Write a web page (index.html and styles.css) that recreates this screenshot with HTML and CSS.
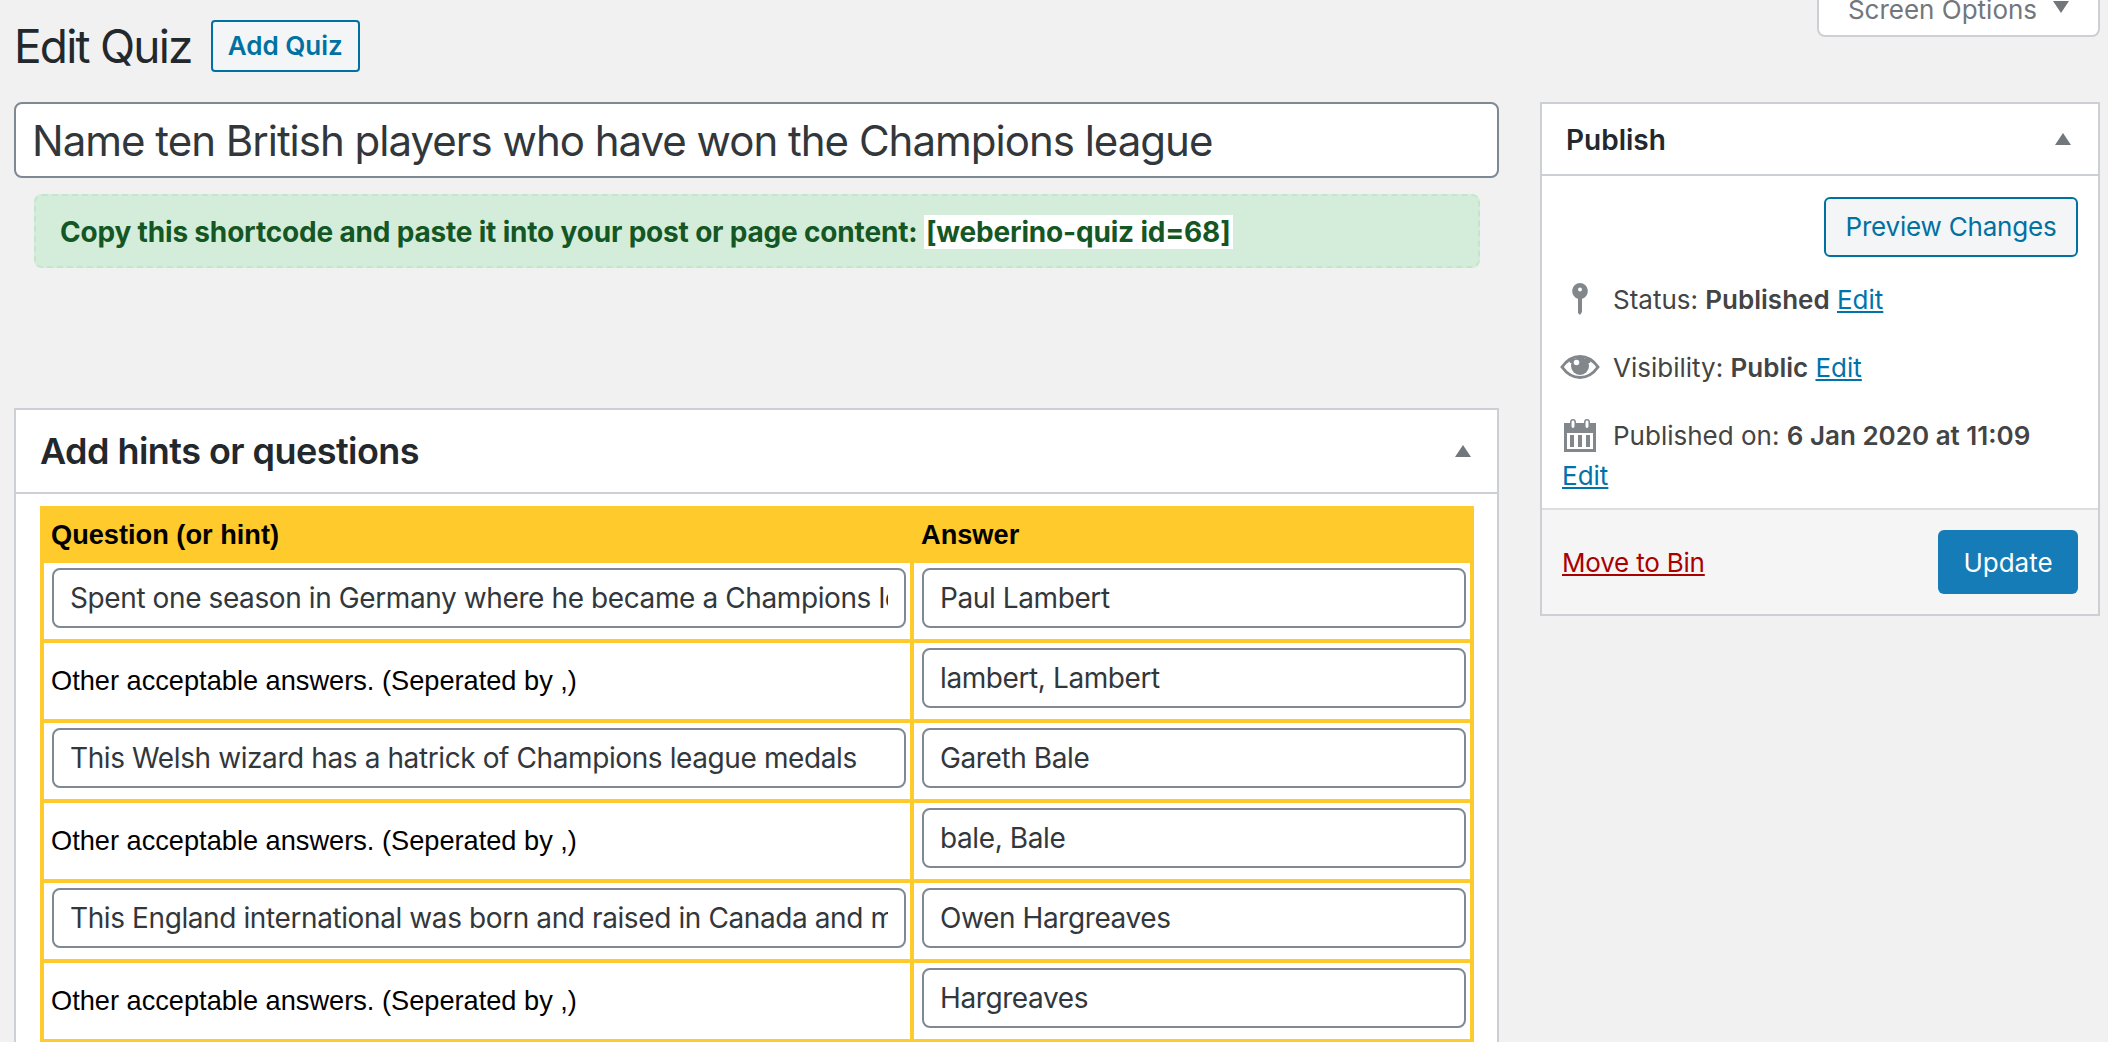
FILE: index.html
```html
<!DOCTYPE html>
<html lang="en">
<head>
    <meta charset="UTF-8">
    <title>Edit Quiz</title>
    <link rel="stylesheet" href="styles.css">
</head>
<body>
    <div class="screen-tab"><span>Screen Options</span><i class="tab-arrow"></i></div>

    <div class="page-head">
        <h1>Edit Quiz</h1>
        <a class="add-btn" href="#">Add Quiz</a>
    </div>

    <div class="columns">
        <div class="main-col">
            <input class="title-input" type="text" value="Name ten British players who have won the Champions league">
            <div class="notice">Copy this shortcode and paste it into your post or page content: <code>[weberino-quiz id=68]</code></div>

            <div class="box hints-box">
                <div class="hints-head">
                    <h2>Add hints or questions</h2>
                    <i class="arrow-up"></i>
                </div>
                <div class="hints-body">
                    <table class="quiz-table">
                        <tr>
                            <th class="col-q">Question (or hint)</th>
                            <th class="col-a">Answer</th>
                        </tr>
                        <tr>
                            <td><input type="text" value="Spent one season in Germany where he became a Champions league winner"></td>
                            <td><input type="text" value="Paul Lambert"></td>
                        </tr>
                        <tr>
                            <td class="label">Other acceptable answers. (Seperated by ,)</td>
                            <td><input type="text" value="lambert, Lambert"></td>
                        </tr>
                        <tr>
                            <td><input type="text" value="This Welsh wizard has a hatrick of Champions league medals"></td>
                            <td><input type="text" value="Gareth Bale"></td>
                        </tr>
                        <tr>
                            <td class="label">Other acceptable answers. (Seperated by ,)</td>
                            <td><input type="text" value="bale, Bale"></td>
                        </tr>
                        <tr>
                            <td><input type="text" value="This England international was born and raised in Canada and moved here"></td>
                            <td><input type="text" value="Owen Hargreaves"></td>
                        </tr>
                        <tr>
                            <td class="label">Other acceptable answers. (Seperated by ,)</td>
                            <td><input type="text" value="Hargreaves"></td>
                        </tr>
                    </table>
                </div>
            </div>
        </div>

        <div class="side-col">
            <div class="box publish-box">
                <div class="publish-head">
                    <h2>Publish</h2>
                    <i class="arrow-up"></i>
                </div>
                <div class="publish-body">
                    <div class="preview-row">
                        <a class="preview-btn" href="#">Preview Changes</a>
                    </div>
                    <div class="meta-row meta-status">
                        <svg class="meta-icon" width="40" height="32" viewBox="0 0 40 32">
                            <path fill="#82878c" d="M20 0a8 8 0 0 1 2 15.700V29l-2 3-2-2V15.700A8 8 0 0 1 20 0z"/>
                            <circle cx="20" cy="6.500" r="2" fill="#fff"/>
                        </svg>
                        <span>Status: <b>Published</b> <a href="#">Edit</a></span>
                    </div>
                    <div class="meta-row meta-visibility">
                        <svg class="meta-icon" width="40" height="24" viewBox="0 0 40 24">
                            <path fill="none" stroke="#82878c" stroke-width="3" d="M2 12C7 5 13 1.500 20 1.500S33 5 38 12c-5 7-11 10.500-18 10.500S7 19 2 12z"/>
                            <path fill="#82878c" d="M9 4h22l-1 4H10z"/>
                            <circle cx="20" cy="11" r="9" fill="#82878c"/>
                            <circle cx="16.500" cy="7.500" r="2.800" fill="#fff"/>
                        </svg>
                        <span>Visibility: <b>Public</b> <a href="#">Edit</a></span>
                    </div>
                    <div class="meta-row meta-date">
                        <svg class="meta-icon" width="40" height="33" viewBox="0 0 40 33">
                            <path fill="#82878c" fill-rule="evenodd" d="M4 4h32v29H4V4zm3 10v16h26V14H7z"/>
                            <path fill="#82878c" d="M10 16h4v12h-4zM18 16h4v12h-4zM26 16h4v12h-4z"/>
                            <rect x="10.800" y="0.800" width="4.400" height="9" rx="2.200" fill="#fff" stroke="#82878c" stroke-width="1.500"/>
                            <rect x="24.800" y="0.800" width="4.400" height="9" rx="2.200" fill="#fff" stroke="#82878c" stroke-width="1.500"/>
                        </svg>
                        <span>Published on: <b>6 Jan 2020 at 11:09</b></span>
                    </div>
                    <a class="date-edit" href="#">Edit</a>
                </div>
                <div class="publish-foot">
                    <a class="bin-link" href="#">Move to Bin</a>
                    <a class="update-btn" href="#">Update</a>
                </div>
            </div>
        </div>
    </div>
</body>
</html>
```

FILE: styles.css
```css
/* Page: 2x WordPress admin, cut at the window */
html, body {
    height: 100%;
    overflow: hidden;
}

body {
    margin: 0;
    background-color: #f1f1f1;
    font-family: "Inter", "Noto Sans", sans-serif;
    font-size: 26px;
    color: #444;
}

a {
    color: #0073aa;
}

/* Screen Options tab, scrolled half out of view */
.screen-tab {
    float: right;
    box-sizing: border-box;
    display: flex;
    align-items: flex-end;
    justify-content: center;
    gap: 16px;
    width: 283px;
    height: 37px;
    margin-right: 8px;
    padding-bottom: 10px;
    background-color: #fff;
    border: 2px solid #ccd0d4;
    border-top: none;
    border-radius: 0 0 8px 8px;
    font-size: 26px;
    line-height: 30px;
    color: #72777c;
}

.tab-arrow {
    width: 0;
    height: 0;
    margin-bottom: 12px;
    border-left: 8px solid transparent;
    border-right: 8px solid transparent;
    border-top: 12px solid #72777c;
}

/* Heading */
.page-head {
    display: flex;
    align-items: center;
    gap: 19px;
    height: 52px;
    padding: 20px 0 0 14px;
}

h1 {
    margin: 0;
    font-size: 46px;
    font-weight: 400;
    letter-spacing: -1.8px;
    color: #23282d;
}

.add-btn {
    box-sizing: border-box;
    display: block;
    width: 149px;
    height: 52px;
    line-height: 48px;
    text-align: center;
    text-decoration: none;
    font-weight: 600;
    color: #0071a1;
    background-color: #f3f5f6;
    border: 2px solid #0071a1;
    border-radius: 4px;
}

/* Columns */
.columns {
    display: grid;
    grid-template-columns: 1485px 560px;
    gap: 41px;
    margin: 30px 0 0 14px;
}

.title-input {
    display: block;
    box-sizing: border-box;
    width: 100%;
    height: 76px;
    padding: 0 16px;
    font-family: inherit;
    font-size: 42px;
    letter-spacing: -1px;
    color: #32373c;
    background-color: #fff;
    border: 2px solid #7e8993;
    border-radius: 8px;
}

.notice {
    box-sizing: border-box;
    height: 74px;
    margin: 16px 19px 0 20px;
    padding: 0 24px;
    font-size: 28px;
    line-height: 73px;
    font-weight: 700;
    letter-spacing: -0.18px;
    color: #155724;
    background-color: #d4edda;
    border: 2px dashed #c3e6cb;
    border-radius: 8px;
}

.notice code {
    font-family: inherit;
    background-color: #fff;
    padding: 0 2px;
}

.box {
    box-sizing: border-box;
    background-color: #fff;
    border: 2px solid #ccd0d4;
}

/* Hints box */
.hints-box {
    margin-top: 140px;
}

.hints-head {
    display: flex;
    justify-content: space-between;
    align-items: center;
    height: 82px;
    padding: 0 26px 0 24px;
    border-bottom: 2px solid #ccd0d4;
}

.hints-head h2 {
    margin: 0;
    font-size: 36px;
    font-weight: 600;
    letter-spacing: -0.55px;
    color: #23282d;
}

.arrow-up {
    width: 0;
    height: 0;
    border-left: 8px solid transparent;
    border-right: 8px solid transparent;
    border-bottom: 12px solid #72777c;
}

.hints-body {
    padding: 12px 24px 0;
}

/* Yellow table */
.quiz-table {
    width: 1434px;
    table-layout: fixed;
    border-collapse: collapse;
    border: 4px solid #ffca2c;
    font-family: "Liberation Sans", Arial, sans-serif;
    font-size: 27.2px;
    color: #000;
}

.quiz-table th {
    height: 49px;
    padding: 0 7px;
    text-align: left;
    font-weight: 700;
    background-color: #ffca2c;
}

.quiz-table .col-q {
    width: 854px;
}

.quiz-table .col-a {
    padding-left: 9px;
}

.quiz-table td {
    height: 76px;
    padding: 0 4px 0 8px;
    border: 4px solid #ffca2c;
}

.quiz-table .label {
    padding-left: 7px;
}

.quiz-table input {
    display: block;
    box-sizing: border-box;
    width: 100%;
    height: 60px;
    margin-bottom: 6px;
    padding: 0 16px;
    font-family: "Inter", "Noto Sans", sans-serif;
    font-size: 28px;
    letter-spacing: -0.4px;
    color: #32373c;
    background-color: #fff;
    border: 2px solid #7e8993;
    border-radius: 8px;
}

/* Publish box */
.publish-head {
    display: flex;
    justify-content: space-between;
    align-items: center;
    height: 70px;
    padding: 0 27px 0 24px;
    border-bottom: 2px solid #ccd0d4;
}

.publish-head h2 {
    margin: 2px 0 0;
    font-size: 28px;
    font-weight: 600;
    color: #23282d;
}

.publish-body {
    height: 311px;
    padding: 21px 20px 0 20px;
}

.preview-row {
    display: flex;
    justify-content: flex-end;
}

.preview-btn {
    box-sizing: border-box;
    display: block;
    width: 254px;
    height: 60px;
    line-height: 56px;
    text-align: center;
    text-decoration: none;
    letter-spacing: -0.2px;
    color: #0071a1;
    background-color: #f3f5f6;
    border: 2px solid #0071a1;
    border-radius: 6px;
}

.meta-row {
    display: flex;
    align-items: center;
    gap: 13px;
    height: 40px;
    margin-left: -2px;
    white-space: nowrap;
}

.meta-row b {
    font-weight: 600;
}

.meta-status {
    margin-top: 22px;
}

.meta-visibility,
.meta-date {
    margin-top: 28px;
}

.date-edit {
    display: block;
    margin-top: 1px;
    line-height: 40px;
}

/* Publish footer */
.publish-foot {
    display: flex;
    justify-content: space-between;
    align-items: center;
    height: 106px;
    padding: 0 20px 0 20px;
    background-color: #f5f5f5;
    border-top: 2px solid #ddd;
    box-sizing: border-box;
}

.bin-link {
    letter-spacing: -0.2px;
    color: #a00;
}

.update-btn {
    box-sizing: border-box;
    display: block;
    width: 140px;
    height: 64px;
    line-height: 66px;
    text-align: center;
    text-decoration: none;
    color: #fff;
    background-color: #157cb8;
    border-radius: 6px;
}
```
